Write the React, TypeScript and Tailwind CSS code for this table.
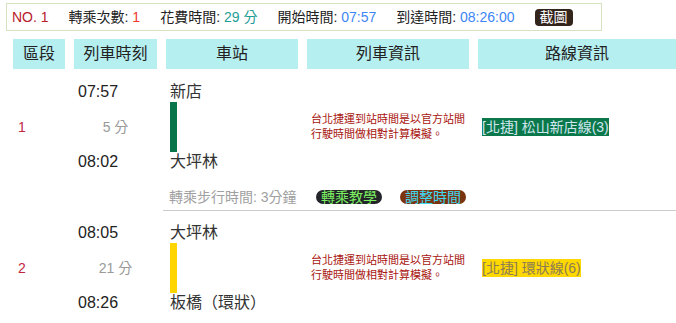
const font = "font-['Liberation_Sans','Noto_Sans_CJK_TC',sans-serif]";

const segments = [
  {
    no: "1",
    dep: "07:57",
    arr: "08:02",
    mins: "5 分",
    from: "新店",
    to: "大坪林",
    bar: "bg-[#08754a]",
    route: "[北捷] 松山新店線(3)",
    routeCls: "bg-[#0b784b] text-[#cfe6ee]",
  },
  {
    no: "2",
    dep: "08:05",
    arr: "08:26",
    mins: "21 分",
    from: "大坪林",
    to: "板橋（環狀）",
    bar: "bg-[#ffd500]",
    route: "[北捷] 環狀線(6)",
    routeCls: "bg-[#ffd800] text-[#8c7c55]",
  },
];

const cols = "grid grid-cols-[52px_83px_132px_162px_1fr] gap-x-[9px] pl-[13px]";

function Segment({ s }: { s: (typeof segments)[number] }) {
  return (
    <div className={cols}>
      <div className="flex items-center py-1 pl-[5px] text-[14px] leading-5 text-[#c0283f]">{s.no}</div>
      <div className="flex h-[98px] flex-col justify-between py-1 text-[16px] leading-5 text-[#222]">
        <div className="pl-1">{s.dep}</div>
        <div className="text-center text-[14px] text-[#999]">{s.mins}</div>
        <div className="pl-1">{s.arr}</div>
      </div>
      <div className="flex flex-col py-1 pl-1 text-[16px] leading-5 text-[#333]">
        <div>{s.from}</div>
        <div className={`h-[50px] w-[7px] ${s.bar}`} />
        <div className="whitespace-nowrap">{s.to}</div>
      </div>
      <div className="flex items-center px-1 text-[11px] leading-[15px] text-[#a8140e]">
        台北捷運到站時間是以官方站間行駛時間做相對計算模擬。
      </div>
      <div className="flex items-center px-1">
        <span className={`text-[14px] leading-[18px] ${s.routeCls}`}>{s.route}</span>
      </div>
    </div>
  );
}

export default function App() {
  return (
    <div className={`${font} h-[323px] w-[676px] overflow-hidden bg-white pl-[6px] pt-[3px]`}>
      <div className="flex h-[28px] w-[596px] items-center gap-[20px] border border-[#d3e2c0] pl-[5px] text-[14px] text-[#222]">
        <span className="text-[#b8202c]">NO. 1</span>
        <span>
          轉乘次數: <span className="text-[#f0382b]">1</span>
        </span>
        <span>
          花費時間: <span className="text-[#1f9e96]">29 分</span>
        </span>
        <span>
          開始時間: <span className="text-[#3d86f5]">07:57</span>
        </span>
        <span>
          到達時間: <span className="text-[#3d86f5]">08:26:00</span>
        </span>
        <button className="h-[17px] rounded-[4px] bg-[#33241c] px-[5px] text-[14px] leading-[17px] text-white">
          截圖
        </button>
      </div>

      <div className={`${cols} -ml-[6px] mt-[8px] text-[16px] text-[#222]`}>
        {["區段", "列車時刻", "車站", "列車資訊", "路線資訊"].map((h) => (
          <div key={h} className="flex h-[30px] items-center justify-center bg-[#b6eff0]">
            {h}
          </div>
        ))}
      </div>

      <div className="-ml-[6px] mt-[9px] flex flex-col">
        <Segment s={segments[0]} />
        <div className={`${cols} mt-2`}>
          <div className="col-start-3 flex items-center whitespace-nowrap py-1 pl-[3px] text-[14px] leading-[18px] text-[#a0a0a0]">
            轉乘步行時間: 3分鐘
          </div>
          <div className="flex items-center gap-[18px] pl-[9px]">
            <span className="rounded-full bg-[#23252a] px-[5px] text-[14px] leading-[14px] text-[#7cf060]">轉乘教學</span>
            <span className="rounded-full bg-[#7a3410] px-[5px] text-[14px] leading-[14px] text-[#3ed8f0]">調整時間</span>
          </div>
        </div>
        <div className="ml-[163px] border-t border-[#cccccc]" />
        <div className="mt-2">
          <Segment s={segments[1]} />
        </div>
      </div>
    </div>
  );
}
